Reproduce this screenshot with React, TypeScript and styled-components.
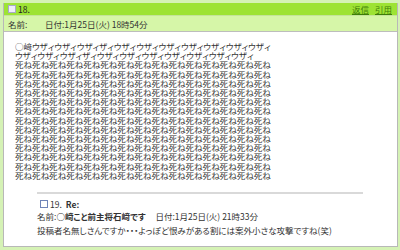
import React from "react";
import styled, { createGlobalStyle } from "styled-components";

const Global = createGlobalStyle`
  html, body { margin: 0; padding: 0; background: #d5f2b5; }
  body { font-family: "Noto Sans CJK JP", "Noto Sans", sans-serif; color: #333; }
`;

const Page = styled.div`
  width: 400px;
  height: 250px;
  box-sizing: border-box;
  padding: 3px 2px 3px 3px;
  background: #d5f2b5;
`;

const Card = styled.div`
  height: 100%;
  box-sizing: border-box;
  border: 1px solid #b8b8b8;
  border-top: none;
  background: #fff;
  display: flex;
  flex-direction: column;
`;

const Header = styled.div`
  height: 12px;
  background: #9de334;
  display: flex;
  align-items: center;
  padding: 0 5px 0 4px;
  font-size: 8.5px;
  line-height: 12px;
`;

const Check = styled.span<{ $tone?: "light" | "blue" }>`
  display: inline-block;
  width: 6px;
  height: 6px;
  box-sizing: content-box;
  border: 1px solid ${(p) => (p.$tone === "blue" ? "#6f84b8" : "#a9a9c8")};
  background: ${(p) => (p.$tone === "blue" ? "#fff" : "#eeeefa")};
  margin-right: 2px;
`;

const Num = styled.span`
  color: #222;
`;

const Spacer = styled.div`
  flex: 1;
`;

const Link = styled.a`
  color: #3d7d08;
  text-decoration: underline;
  margin-left: 6px;
  cursor: pointer;
`;

const NameRow = styled.div`
  height: 15px;
  background: #d6f6a8;
  border-top: 1px solid #c4e49a;
  border-bottom: 1px solid #bdbdbd;
  display: flex;
  align-items: center;
  padding-left: 4px;
  font-size: 8.5px;
  color: #333;
`;

const Label = styled.span<{ $w?: number }>`
  display: inline-block;
  width: ${(p) => (p.$w ? `${p.$w}px` : "auto")};
`;

const Body = styled.div`
  flex: 1;
  padding: 10px 0 0 11px;
`;

const Text = styled.div`
  font-size: 8.5px;
  line-height: 9.2px;
  color: #333;
  font-feature-settings: "palt";
  white-space: nowrap;
`;

const Line = styled.div``;

const Reply = styled.div`
  margin: 12px 0 0 22px;
  width: 326px;
  border-top: 2px solid #d9d9d9;
  padding-top: 3px;
  font-size: 8.5px;
  color: #333;
`;

const ReplyHead = styled.div`
  display: flex;
  align-items: center;
  height: 13px;
  padding-left: 3px;
`;

const Re = styled.span`
  font-weight: bold;
  margin-left: 4px;
`;

const ReplyLine = styled.div`
  height: 13.5px;
  line-height: 13.5px;
  font-feature-settings: "palt";
  white-space: nowrap;
`;

const Bold = styled.span`
  font-weight: bold;
  margin-right: 10px;
`;

const uzai = "ウザィウザィウザィザィ" + "ウザィ".repeat(7);
const lines = ["○﨑" + uzai, uzai, ...Array(13).fill("死ね".repeat(15))];

export default function App() {
  return (
    <>
      <Global />
      <Page>
        <Card>
          <Header>
            <Check />
            <Num>18.</Num>
            <Spacer />
            <Link>返信</Link>
            <Link>引用</Link>
          </Header>
          <NameRow>
            <Label $w={37}>名前:</Label>
            <Label>日付:1月25日(火) 18時54分</Label>
          </NameRow>
          <Body>
            <Text>
              {lines.map((l, i) => (
                <Line key={i}>{l}</Line>
              ))}
            </Text>
            <Reply>
              <ReplyHead>
                <Check $tone="blue" />
                <span>19.</span>
                <Re>Re:</Re>
              </ReplyHead>
              <ReplyLine>
                名前:<Bold>○﨑こと前主将石﨑です</Bold>日付:1月25日(火) 21時33分
              </ReplyLine>
              <ReplyLine>
                投稿者名無しさんですか・・・よっぽど恨みがある割には案外小さな攻撃ですね(笑)
              </ReplyLine>
            </Reply>
          </Body>
        </Card>
      </Page>
    </>
  );
}
